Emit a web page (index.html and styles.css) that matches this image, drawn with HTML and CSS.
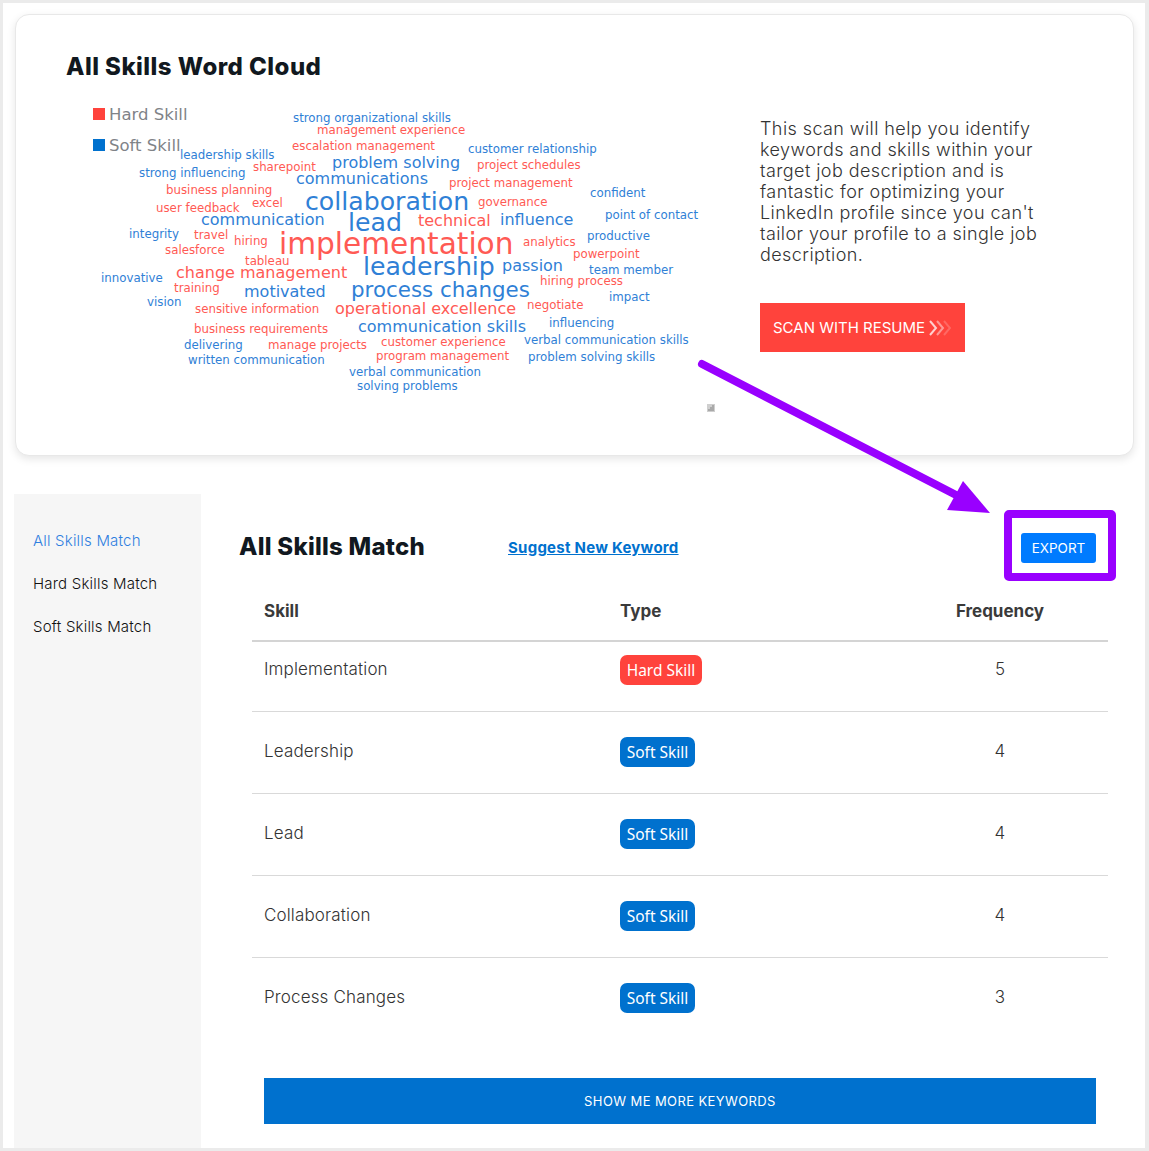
FILE: index.html
```html
<!DOCTYPE html>
<html lang="en">
<head>
<meta charset="utf-8">
<title>All Skills Word Cloud</title>
<link rel="stylesheet" href="styles.css">
</head>
<body>
<div class="frame">
  <section class="card">
    <div class="card-left">
      <h2 class="card-title">All Skills Word Cloud</h2>
      <svg class="cloud" viewBox="66 100 660 320" width="660" height="320" role="img">
        <rect class="hard-fill" x="93" y="108" width="12" height="12"/>
        <text class="legend" x="109" y="119.500">Hard Skill</text>
        <rect class="soft-fill" x="93" y="139" width="12" height="12"/>
        <text class="legend" x="109" y="150.500">Soft Skill</text>

        <g class="s12 soft">
          <text x="293" y="122">strong organizational skills</text>
          <text x="468" y="153">customer relationship</text>
          <text x="180" y="159">leadership skills</text>
          <text x="139" y="177">strong influencing</text>
          <text x="590" y="197">confident</text>
          <text x="605" y="219">point of contact</text>
          <text x="129" y="238">integrity</text>
          <text x="587" y="240">productive</text>
          <text x="589" y="274">team member</text>
          <text x="101" y="282">innovative</text>
          <text x="609" y="301">impact</text>
          <text x="147" y="306">vision</text>
          <text x="549" y="327">influencing</text>
          <text x="524" y="344">verbal communication skills</text>
          <text x="184" y="349">delivering</text>
          <text x="528" y="361">problem solving skills</text>
          <text x="188" y="364">written communication</text>
          <text x="349" y="376">verbal communication</text>
          <text x="357" y="390">solving problems</text>
        </g>
        <g class="s12 hard">
          <text x="317" y="134">management experience</text>
          <text x="292" y="150">escalation management</text>
          <text x="253" y="171">sharepoint</text>
          <text x="477" y="169">project schedules</text>
          <text x="449" y="187">project management</text>
          <text x="166" y="194">business planning</text>
          <text x="252" y="207">excel</text>
          <text x="478" y="206">governance</text>
          <text x="156" y="212">user feedback</text>
          <text x="194" y="239">travel</text>
          <text x="234" y="245">hiring</text>
          <text x="523" y="246">analytics</text>
          <text x="165" y="254">salesforce</text>
          <text x="573" y="258">powerpoint</text>
          <text x="245" y="265">tableau</text>
          <text x="540" y="285">hiring process</text>
          <text x="174" y="292">training</text>
          <text x="527" y="309">negotiate</text>
          <text x="195" y="313">sensitive information</text>
          <text x="194" y="333">business requirements</text>
          <text x="268" y="349">manage projects</text>
          <text x="381" y="346">customer experience</text>
          <text x="376" y="360">program management</text>
        </g>
        <g class="s16 soft">
          <text x="332" y="168">problem solving</text>
          <text x="296" y="184">communications</text>
          <text x="201" y="225">communication</text>
          <text x="500" y="225">influence</text>
          <text x="502" y="271">passion</text>
          <text x="244" y="297">motivated</text>
          <text x="358" y="332">communication skills</text>
        </g>
        <g class="s16 hard">
          <text x="418" y="226">technical</text>
          <text x="176" y="278">change management</text>
          <text x="335" y="314">operational excellence</text>
        </g>
        <text class="s21 soft" x="351" y="297">process changes</text>
        <text class="s26 soft" x="305" y="210">collaboration</text>
        <text class="s26 soft" x="348" y="231">lead</text>
        <text class="s26 soft" x="363" y="275">leadership</text>
        <text class="s31 hard" x="279" y="254">implementation</text>

        <g class="menu-icon">
          <rect x="707" y="404" width="8" height="8"/>
          <path class="menu-icon-mark" d="M708 409h2v-2h2v-2h2v6h-6z"/>
        </g>
      </svg>
    </div>
    <div class="card-right">
      <p class="scan-text">This scan will help you identify<br>keywords and skills within your<br>target job description and is<br>fantastic for optimizing your<br>LinkedIn profile since you can't<br>tailor your profile to a single job<br>description.</p>
      <a class="scan-btn" href="#">SCAN WITH RESUME
        <svg class="chevrons" viewBox="0 0 22 16" width="22" height="16">
          <path class="chev chev-a" d="M1 1l6 7-6 7"/>
          <path class="chev chev-b" d="M8 1l6 7-6 7"/>
          <path class="chev chev-c" d="M15 1l6 7-6 7"/>
        </svg>
      </a>
    </div>
  </section>

  <div class="lower">
    <nav class="side">
      <a class="side-link active" href="#">All Skills Match</a>
      <a class="side-link" href="#">Hard Skills Match</a>
      <a class="side-link" href="#">Soft Skills Match</a>
    </nav>
    <main class="content">
      <div class="content-head">
        <h2 class="content-title">All Skills Match</h2>
        <a class="suggest" href="#">Suggest New Keyword</a>
        <button class="export" type="button">EXPORT</button>
      </div>
      <table class="skills">
        <thead>
          <tr><th class="c-skill">Skill</th><th class="c-type">Type</th><th class="c-freq">Frequency</th></tr>
        </thead>
        <tbody>
          <tr><td class="c-skill">Implementation</td><td class="c-type"><span class="badge hard-bg">Hard Skill</span></td><td class="c-freq">5</td></tr>
          <tr><td class="c-skill">Leadership</td><td class="c-type"><span class="badge soft-bg">Soft Skill</span></td><td class="c-freq">4</td></tr>
          <tr><td class="c-skill">Lead</td><td class="c-type"><span class="badge soft-bg">Soft Skill</span></td><td class="c-freq">4</td></tr>
          <tr><td class="c-skill">Collaboration</td><td class="c-type"><span class="badge soft-bg">Soft Skill</span></td><td class="c-freq">4</td></tr>
          <tr><td class="c-skill">Process Changes</td><td class="c-type"><span class="badge soft-bg">Soft Skill</span></td><td class="c-freq">3</td></tr>
        </tbody>
      </table>
      <a class="more" href="#">SHOW ME MORE KEYWORDS</a>
    </main>
  </div>

  <svg class="annotation" viewBox="0 0 1149 1151" width="1149" height="1151" aria-hidden="true">
    <line class="arrow-line" x1="702" y1="364" x2="958" y2="496"/>
    <polygon class="arrow-head" points="963,481 990,513 947,510"/>
    <rect class="arrow-box" x="1008" y="514" width="104" height="63" rx="1"/>
  </svg>
</div>
</body>
</html>
```

FILE: styles.css
```css
* { box-sizing: border-box; }
html, body { margin: 0; padding: 0; background: #fff; }
body { font-family: Inter, "Liberation Sans", sans-serif; color: #333; }

.frame {
  position: relative;
  width: 1149px;
  height: 1151px;
  border: 3px solid #ebebeb;
  border-width: 3px 4px 3px 3px;
  padding: 11px 11px 0 11px;
  overflow: hidden;
}

.card {
  display: flex;
  height: 442px;
  margin-left: 1px;
  padding: 0 0 0 50px;
  border: 1px solid #e8e8e8;
  border-radius: 14px;
  background: #fff;
  box-shadow: 0 3px 8px rgba(0, 0, 0, .10);
}
.card-left { width: 694px; flex: none; }
.card-title {
  margin: 37px 0 18px;
  height: 30px;
  font-size: 24px;
  line-height: 30px;
  font-weight: 800;
  color: #111820;
  letter-spacing: .45px;
  white-space: nowrap;
}
.cloud { display: block; }
.cloud text { font-family: "DejaVu Sans", sans-serif; }
.legend { font-size: 16.500px; fill: #7f8388; }
.hard-fill { fill: #ff433c; }
.soft-fill { fill: #0071ce; }
.soft { fill: #2f80d6; }
.hard { fill: #ff5a54; }
.s12 { font-size: 11.800px; }
.s16 { font-size: 16px; }
.s21 { font-size: 21.400px; }
.s26 { font-size: 25.200px; }
.s31 { font-size: 29.600px; }
.menu-icon rect { fill: #cfcfcf; }
.menu-icon-mark { fill: #8f8f8f; opacity: .6; }

.card-right { padding-top: 103px; }
.scan-text {
  margin: 0 0 38px;
  font-size: 18px;
  font-weight: 300;
  letter-spacing: .42px;
  line-height: 21px;
  color: #333;
  white-space: nowrap;
}
.scan-btn {
  display: inline-flex;
  align-items: center;
  gap: 4px;
  width: 205px;
  height: 49px;
  padding-left: 13px;
  background: #ff433c;
  color: #fff;
  font-size: 15px;
  text-decoration: none;
  white-space: nowrap;
}
.chev { fill: none; stroke: #fff; stroke-width: 2; }
.chev-a { opacity: .75; }
.chev-b { opacity: .45; }
.chev-c { opacity: .2; }

.lower { display: flex; margin-top: 38px; height: 654px; }
.side {
  width: 187px;
  flex: none;
  display: flex;
  flex-direction: column;
  gap: 24px;
  padding: 37px 0 0 19px;
  background: #f6f6f6;
}
.side-link {
  font-size: 15px;
  font-weight: 300;
  letter-spacing: .2px;
  line-height: 19px;
  color: #111;
  text-decoration: none;
  white-space: nowrap;
}
.side-link.active { color: #2f7fe0; }

.content { flex: 1; min-width: 0; padding: 39px 38px 0 38px; }
.content-head {
  display: flex;
  align-items: center;
  height: 30px;
  margin-bottom: 27px;
}
.content-title {
  width: 269px;
  flex: none;
  margin: -4px 0 0;
  font-size: 24px;
  letter-spacing: .25px;
  font-weight: 800;
  color: #111820;
  white-space: nowrap;
}
.suggest {
  margin-top: -1px;
  font-size: 15px;
  font-weight: 700;
  letter-spacing: .25px;
  color: #0071ce;
  white-space: nowrap;
}
.export {
  width: 75px;
  height: 30px;
  margin-left: auto;
  padding: 0;
  border: 0;
  border-radius: 3px;
  background: #007bff;
  color: #fff;
  font: 400 13.500px Inter, sans-serif;
}

.skills {
  width: 856px;
  margin-left: 13px;
  border-collapse: collapse;
  table-layout: fixed;
}
.skills th {
  height: 51px;
  padding: 0 0 8px;
  border-bottom: 2px solid #d4d4d4;
  font-size: 17px;
  font-weight: 700;
  color: #3a3a3a;
  text-align: left;
}
.skills td {
  padding: 25px 0 26px;
  border-bottom: 1px solid #d9d9d9;
  font-size: 17px;
  font-weight: 300;
  letter-spacing: .15px;
  line-height: 28px;
  color: #333;
  vertical-align: top;
}
.skills tbody tr:first-child td { padding-top: 13px; }
.skills tbody tr:last-child td { border-bottom: 0; }
.skills .c-skill { width: 356px; padding-left: 12px; }
.skills .c-type { width: 284px; padding-left: 12px; }
.skills .c-freq { text-align: center; }
.badge {
  display: inline-block;
  height: 30px;
  width: 75px;
  padding: 0;
  border-radius: 7px;
  color: #fff;
  font-family: "Noto Sans", sans-serif;
  font-size: 15.500px;
  font-weight: 400;
  letter-spacing: 0;
  line-height: 30px;
  text-align: center;
  vertical-align: top;
}
.badge.hard-bg { width: 82px; }
.hard-bg { background: #ff433c; }
.soft-bg { background: #0071ce; }

.more {
  display: block;
  width: 832px;
  height: 46px;
  margin: 39px 0 0 25px;
  background: #0071ce;
  color: #fff;
  font-size: 13px;
  letter-spacing: .4px;
  line-height: 46px;
  text-align: center;
  text-decoration: none;
}

.annotation {
  position: absolute;
  left: -3px;
  top: -3px;
  pointer-events: none;
}
.arrow-line { stroke: #9900ff; stroke-width: 8; stroke-linecap: round; }
.arrow-head { fill: #9900ff; }
.arrow-box { fill: none; stroke: #9900ff; stroke-width: 8; }
```
